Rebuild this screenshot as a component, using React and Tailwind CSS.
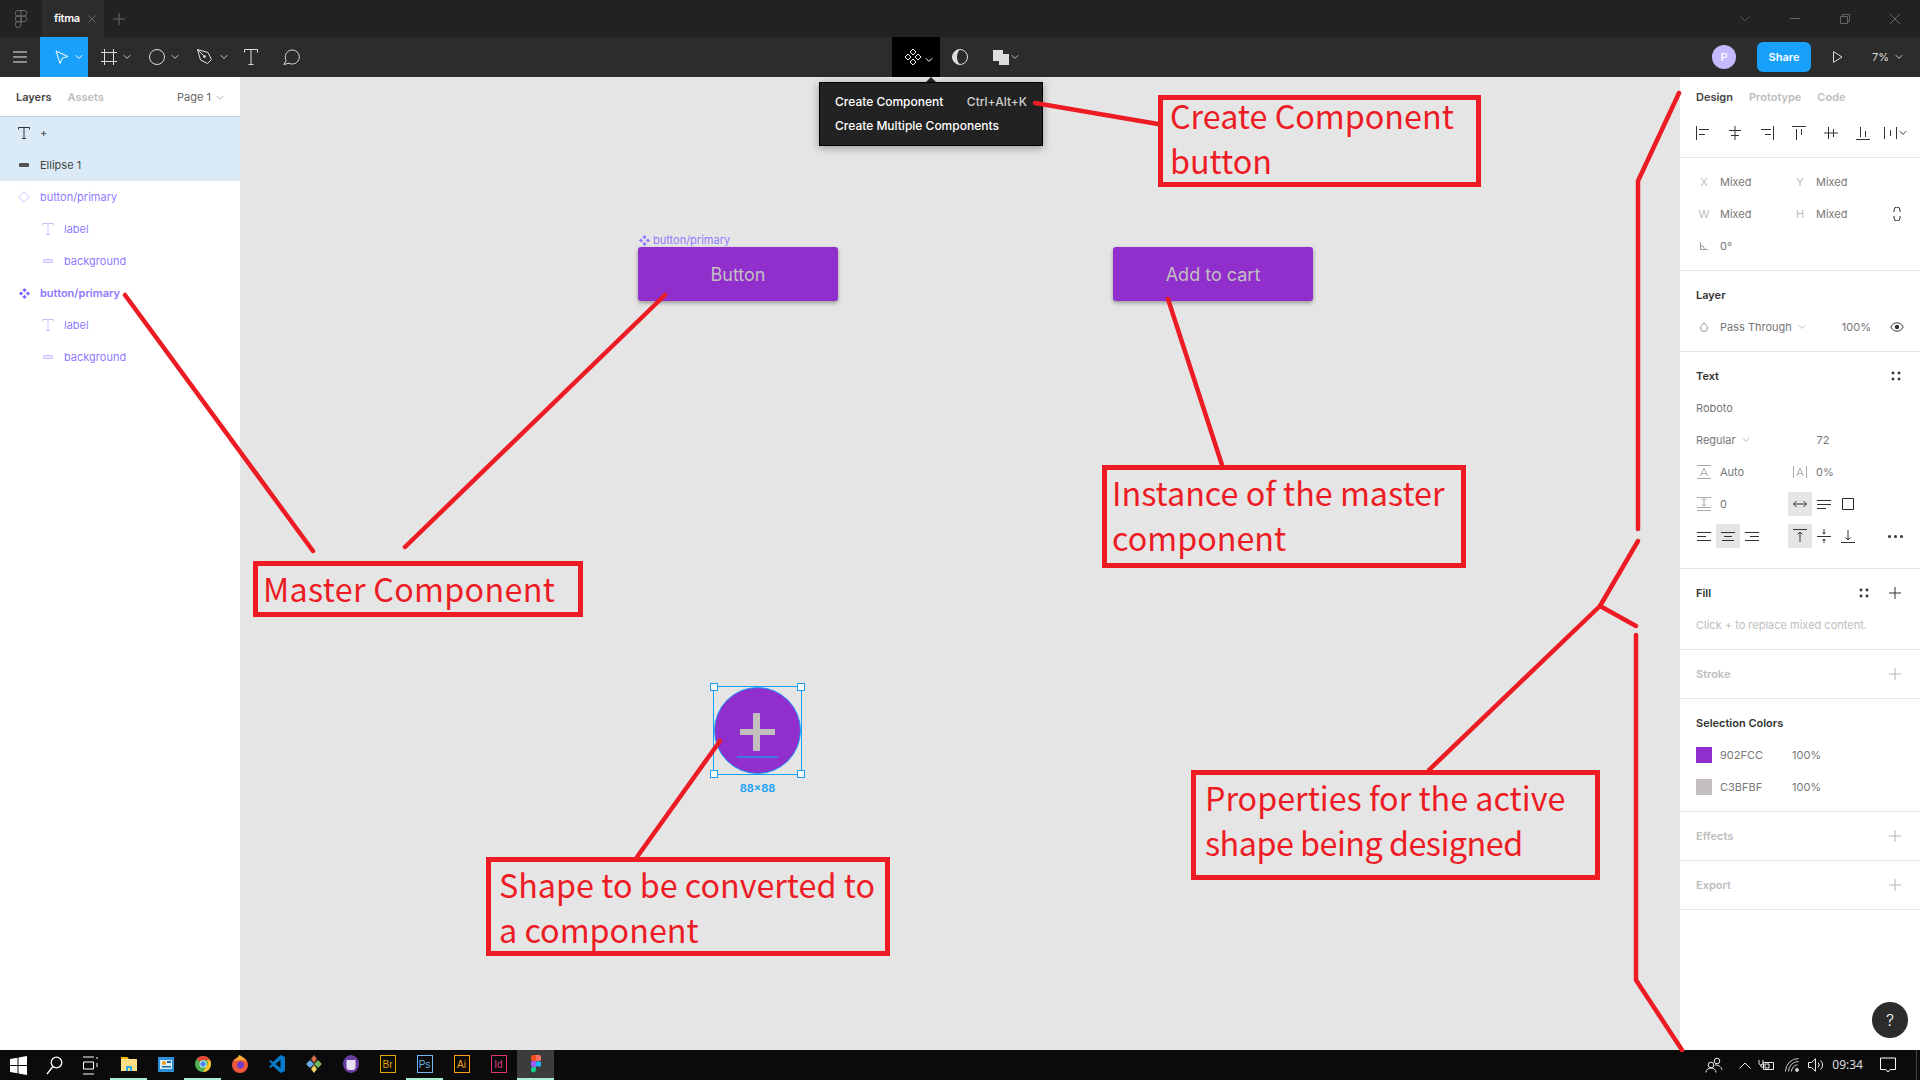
import React from 'react';

const Chevron = ({ className = 'text-[#b3b3b3]' }) => (
  <svg width="8" height="6" viewBox="0 0 8 6" fill="none" stroke="currentColor" className={className}><path d="M.8 1.2 4 4.4l3.2-3.2" /></svg>
);

const Plus = ({ className = 'text-[#b3b3b3]' }) => (
  <svg width="12" height="12" viewBox="0 0 12 12" stroke="currentColor" className={className}><path d="M6 0v12M0 6h12" /></svg>
);

const Dots = () => (
  <svg width="10" height="10" viewBox="0 0 10 10" fill="#333"><circle cx="2" cy="2" r="1.4" /><circle cx="8" cy="2" r="1.4" /><circle cx="2" cy="8" r="1.4" /><circle cx="8" cy="8" r="1.4" /></svg>
);

const TIcon = ({ className }) => (
  <svg width="12" height="12" viewBox="0 0 12 12" fill="none" stroke="currentColor" className={className}><path d="M.5 2.5V.5h11v2M6 .5v11M4 11.5h4" /></svg>
);

const RectIcon = ({ dark }) => (
  <div className={dark ? 'h-[4px] w-[10px] rounded-[1px] bg-[#555]' : 'h-[4px] w-[10px] rounded-[1px] border border-[#c8c0ff] bg-[#ece9ff]'} />
);

const ComponentSmall = ({ color = '#7b61ff' }) => (
  <svg width="11" height="11" viewBox="0 0 10 10" fill={color}>
    <path d="M5 0 6.9 1.9 5 3.8 3.1 1.9zM5 6.2l1.9 1.9L5 10 3.1 8.1zM1.9 3.1 3.8 5 1.9 6.9 0 5zM8.1 3.1 10 5 8.1 6.9 6.2 5z" />
  </svg>
);

function LayerRow({ icon, indent, text, bold, selected, light }) {
  return (
    <div className={`flex h-8 items-center ${selected ? 'bg-[#daebf7]' : ''}`}>
      <div className={`flex w-6 shrink-0 justify-center ${indent ? 'ml-9' : 'ml-3'}`}>{icon}</div>
      <span className={`ml-1 text-[11px] ${bold ? 'font-semibold' : ''} ${light ? 'text-[#444]' : 'text-[#8f7bff]'}`}>{text}</span>
    </div>
  );
}

function LeftPanel() {
  return (
    <div className="w-[240px] shrink-0 bg-white">
      <div className="flex h-10 items-center border-b border-[#c9d4dc] pl-4 pr-4 pt-[2px] text-[11px]">
        <span className="font-semibold text-[#444]">Layers</span>
        <span className="ml-4 font-semibold text-[#bdbdbd]">Assets</span>
        <span className="ml-auto mr-[5px] text-[#666]">Page 1</span>
        <Chevron />
      </div>
      <LayerRow selected light icon={<TIcon className="text-[#333]" />} text="+" />
      <LayerRow selected light icon={<RectIcon dark />} text="Ellipse 1" />
      <LayerRow
        icon={<svg width="12" height="12" viewBox="0 0 12 12" fill="none" stroke="#c8c0ff"><path d="M6 .7 11.3 6 6 11.3.7 6z" /></svg>}
        text="button/primary"
      />
      <LayerRow indent icon={<TIcon className="text-[#c8c0ff]" />} text="label" />
      <LayerRow indent icon={<RectIcon />} text="background" />
      <LayerRow bold icon={<ComponentSmall />} text="button/primary" />
      <LayerRow indent icon={<TIcon className="text-[#c8c0ff]" />} text="label" />
      <LayerRow indent icon={<RectIcon />} text="background" />
    </div>
  );
}

function TitleBar() {
  return (
    <div className="flex h-[37px] shrink-0 items-center bg-[#222222]">
      <div className="flex w-[42px] justify-center">
        <svg width="12" height="18" viewBox="0 0 12 18" fill="none" stroke="#6b6b6b">
          <path d="M3 .5h6a2.7 2.7 0 0 1 0 5.6H3A2.7 2.7 0 0 1 3 .5zM3 6.1h3v5.6H3a2.8 2.8 0 0 1 0-5.6zM6 6.1h3a2.8 2.8 0 0 1 0 5.6H6zM3 11.7h3v2.9a2.9 2.9 0 1 1-3-2.9zM6 .5v5.6" />
        </svg>
      </div>
      <div className="flex h-full w-[62px] items-center bg-[#2c2c2c] pl-3">
        <span className="text-[11px] font-semibold tracking-[-0.3px] text-white">fitma</span>
        <svg width="8" height="8" viewBox="0 0 8 8" stroke="#666" className="ml-[8px]"><path d="m.5.5 7 7M7.5.5l-7 7" /></svg>
      </div>
      <div className="ml-[9px]"><Plus className="text-[#666]" /></div>
      <div className="ml-auto flex items-center">
        <div className="flex w-[50px] justify-center">
          <svg width="10" height="6" viewBox="0 0 10 6" fill="none" stroke="#555"><path d="m.5.5 4.5 4.5L9.500.5" /></svg>
        </div>
        <div className="flex w-[50px] justify-center"><div className="h-px w-[10px] bg-[#666]" /></div>
        <div className="flex w-[50px] justify-center">
          <svg width="10" height="10" viewBox="0 0 10 10" fill="none" stroke="#666"><path d="M.5 2.500h7v7h-7zM2.500 2.500v-2h7v7h-2" /></svg>
        </div>
        <div className="flex w-[50px] justify-center">
          <svg width="10" height="10" viewBox="0 0 10 10" stroke="#666"><path d="m0 0 10 10M10 0 0 10" /></svg>
        </div>
      </div>
    </div>
  );
}

function ToolBar() {
  return (
    <div className="relative flex h-10 shrink-0 items-center bg-[#2c2c2c] text-white">
      <div className="flex w-10 justify-center">
        <svg width="14" height="12" viewBox="0 0 14 12" stroke="#eee"><path d="M0 1h14M0 6h14M0 11h14" /></svg>
      </div>
      <div className="flex h-full w-12 items-center bg-[#18a0fb] pl-[15px]">
        <svg width="14" height="15" viewBox="0 0 14 15" fill="none" stroke="#fff"><path d="M1 1 13 6.500 7.500 8 5 13.500z" /></svg>
        <Chevron className="ml-[6px] text-white" />
      </div>
      <div className="ml-[13px] flex items-center">
        <svg width="16" height="16" viewBox="0 0 16 16" stroke="#ddd"><path d="M3.500 0v16M12.500 0v16M0 3.500h16M0 12.500h16" /></svg>
        <Chevron className="ml-[6px] text-[#ccc]" />
      </div>
      <div className="ml-[18px] flex items-center">
        <svg width="16" height="16" viewBox="0 0 16 16" fill="none" stroke="#ddd"><circle cx="8" cy="8" r="7.500" /></svg>
        <Chevron className="ml-[6px] text-[#ccc]" />
      </div>
      <div className="ml-[18px] flex items-center">
        <svg width="16" height="16" viewBox="0 0 16 16" fill="none" stroke="#ddd"><path d="M.5.5 11 3.500l3.500 7-4 4-7-3.500zM.5.500 6.500 6.500" /><circle cx="7.500" cy="7.500" r="1" fill="#ddd" /></svg>
        <Chevron className="ml-[7px] text-[#ccc]" />
      </div>
      <div className="ml-[16px]">
        <svg width="14" height="16" viewBox="0 0 14 16" fill="none" stroke="#ddd"><path d="M.5 3.500V.5h13v3M7 .5v15M4.500 15.500h5" /></svg>
      </div>
      <div className="ml-[25px]">
        <svg width="17" height="16" viewBox="0 0 17 16" fill="none" stroke="#ddd"><path d="M3.200 11.500A7 7 0 1 1 6 14.200L.8 15.500z" /></svg>
      </div>

      <div className="ml-[592px] flex h-full w-12 items-center bg-black pl-3">
        <svg width="18" height="18" viewBox="0 0 18 18" fill="none" stroke="#eee"><path d="M9 1l3 3-3 3-3-3zM9 11l3 3-3 3-3-3zM4 6l3 3-3 3-3-3zM14 6l3 3-3 3-3-3z" /></svg>
        <Chevron className="ml-[3px] mt-[6px] text-white" />
      </div>
      <div className="ml-3">
        <svg width="16" height="16" viewBox="0 0 16 16"><circle cx="8" cy="8" r="7.500" fill="none" stroke="#ddd" /><path d="M8 .5a7.500 7.500 0 0 0 0 15c-2-2-3-4.500-3-7.500s1-5.500 3-7.500z" fill="#ddd" /></svg>
      </div>
      <div className="ml-[25px] flex items-center">
        <svg width="16" height="15" viewBox="0 0 16 15" fill="#ddd"><path d="M0 0h10v4h6v11H6v-4H0z" /></svg>
        <Chevron className="ml-[2px] text-[#bbb]" />
      </div>

      <div className="ml-auto flex items-center">
        <div className="flex h-6 w-6 items-center justify-center rounded-full bg-[#c7b9ff] text-[11px] font-medium">P</div>
        <div className="ml-[21px] flex h-[30px] w-[54px] items-center justify-center rounded-[6px] bg-[#18a0fb] text-[11px] font-semibold">Share</div>
        <svg width="10" height="12" viewBox="0 0 10 12" fill="none" stroke="#ddd" className="ml-[22px]"><path d="M.5.6 9 6 .5 11.400z" /></svg>
        <span className="ml-[29px] text-[11px] text-[#ddd]">7%</span>
        <Chevron className="ml-[6px] mr-[17px] text-[#ccc]" />
      </div>
    </div>
  );
}

function Callout({ className, children }) {
  return (
    <div className={`absolute border-[5px] border-[#ed1c24] font-['Noto_Sans_CJK_SC',sans-serif] text-[32.3px] leading-[45px] text-[#ed1c24] ${className}`}>
      {children}
    </div>
  );
}

function Canvas() {
  return (
    <div className="relative flex-1 bg-[#e5e5e5]">
      {/* master button */}
      <div className="absolute left-[399px] top-[155px] flex items-center gap-[3px] text-[11px] text-[#8f7bff]">
        <ComponentSmall color="#8f7bff" /> button/primary
      </div>
      <div className="absolute left-[398px] top-[170px] flex h-[54px] w-[200px] items-center justify-center rounded-[3px] bg-[#902fcc] text-[18px] text-[#c3bfbf] shadow-[0_2px_4px_rgba(0,0,0,0.35)]">Button</div>
      <div className="absolute left-[873px] top-[170px] flex h-[54px] w-[200px] items-center justify-center rounded-[3px] bg-[#902fcc] text-[18px] text-[#c3bfbf] shadow-[0_2px_4px_rgba(0,0,0,0.35)]">Add to cart</div>

      {/* selected ellipse */}
      <div className="absolute left-[473px] top-[609px] flex h-[89px] w-[89px] items-center justify-center border border-[#18a0fb]">
        <div className="relative h-[87px] w-[87px] rounded-full border border-[#18a0fb] bg-[#902fcc]">
          <div className="absolute left-[38px] top-[25px] h-[38px] w-[7px] bg-[#c3bfbf]" />
          <div className="absolute left-[25px] top-[41px] h-[6px] w-[35px] bg-[#c3bfbf]" />
          <div className="absolute left-[22px] top-[68px] h-[2px] w-[41px] bg-[#3f78e0]" />
        </div>
        <div className="absolute -left-[4px] -top-[4px] h-2 w-2 border border-[#18a0fb] bg-white" />
        <div className="absolute -right-[4px] -top-[4px] h-2 w-2 border border-[#18a0fb] bg-white" />
        <div className="absolute -left-[4px] -bottom-[4px] h-2 w-2 border border-[#18a0fb] bg-white" />
        <div className="absolute -right-[4px] -bottom-[4px] h-2 w-2 border border-[#18a0fb] bg-white" />
      </div>
      <div className="absolute left-[473px] top-[703px] w-[89px] text-center text-[11px] font-semibold text-[#18a0fb]">88×88</div>

      {/* component tooltip */}
      <div className="absolute left-[579px] top-[5px] h-16 w-[224px] border border-black bg-[#222222] pl-[15px] pt-[7px] text-[12px] font-medium text-white shadow-[0_2px_8px_rgba(0,0,0,0.35)]">
        <div className="flex h-6 items-center">
          <span>Create Component</span>
          <span className="ml-auto mr-[15px] text-[#cfcfcf]">Ctrl+Alt+K</span>
        </div>
        <div className="flex h-6 items-center">Create Multiple Components</div>
      </div>
      <div className="absolute left-[686px] top-0 h-0 w-0 border-x-[5px] border-b-[5px] border-x-transparent border-b-[#222222]" />

      <Callout className="left-[918px] top-[18px] h-[92px] w-[323px] pl-[7px]"><div className="-mt-[7px]">Create Component<br />button</div></Callout>
      <Callout className="left-[13px] top-[484px] h-[56px] w-[330px] pl-[5px] tracking-[0.3px]">Master Component</Callout>
      <Callout className="left-[862px] top-[388px] h-[103px] w-[364px] pl-[5px]">Instance of the master<br />component</Callout>
      <Callout className="left-[246px] top-[780px] h-[99px] w-[404px] pl-[8px]">Shape to be converted to<br />a component</Callout>
      <Callout className="left-[951px] top-[693px] h-[110px] w-[409px] pl-[9px]">Properties for the active<br /><span className="tracking-[-0.5px]">shape being designed</span></Callout>
    </div>
  );
}

const Section = ({ className = '', children }) => <div className={`border-b border-[#e5e5e5] ${className}`}>{children}</div>;
const Row = ({ children }) => <div className="flex h-8 items-center pl-3 pr-[19px] text-[11px] text-[#777]">{children}</div>;
const Cell = ({ active, children }) => (
  <div className={`flex h-6 w-6 shrink-0 items-center justify-center rounded-[2px] ${active ? 'bg-[#e5e5e5]' : ''}`}>{children}</div>
);
const Label = ({ children }) => <div className="flex w-6 shrink-0 justify-center text-[#bdbdbd]">{children}</div>;
const Value = ({ children }) => <div className="ml-1 w-[68px] shrink-0">{children}</div>;
const Head = ({ muted, children, right }) => (
  <div className="flex h-8 items-center pl-4 pr-[19px] text-[11px] font-semibold">
    <span className={muted ? 'text-[#bdbdbd]' : 'text-[#333]'}>{children}</span>
    <div className="ml-auto flex items-center">{right}</div>
  </div>
);
const Icon12 = ({ d, w = 14, h = 14, stroke = '#333' }) => (
  <svg width={w} height={h} viewBox={`0 0 ${w} ${h}`} fill="none" stroke={stroke}><path d={d} /></svg>
);

function RightPanel() {
  return (
    <div className="w-[240px] shrink-0 bg-white">
      <Section className="pb-2">
        <div className="flex h-10 items-center gap-4 pl-4 text-[11px] font-semibold text-[#bdbdbd]">
          <span className="text-[#444]">Design</span>
          <span>Prototype</span>
          <span>Code</span>
        </div>
        <div className="flex h-8 items-center pl-[7px]">
          {[
            'M.5 0v14M3 3.500h10M3 8.500h6',
            'M7 0v14M1 4.500h12M3 9.500h8',
            'M13.500 0v14M1 3.500h10M5 8.500h6',
            'M0 .5h14M4.500 3v11M9.500 3v6',
            'M0 7h14M4.500 1v12M9.500 3v8',
            'M0 13.500h14M4.500 1v10M9.500 5v6',
          ].map((d) => (
            <div key={d} className="flex w-8 justify-center"><Icon12 d={d} /></div>
          ))}
          <div className="flex w-8 items-center justify-center">
            <Icon12 d="M.5 1v12M12.500 1v12M6.500 4v6" w={13} />
            <Chevron className="ml-[2px] text-[#333]" />
          </div>
        </div>
      </Section>
      <Section className="py-2">
        <Row><Label>X</Label><Value>Mixed</Value><Label>Y</Label><Value>Mixed</Value></Row>
        <Row>
          <Label>W</Label><Value>Mixed</Value><Label>H</Label><Value>Mixed</Value>
          <div className="ml-auto"><Icon12 w={8} d="M1 5V3a3 3 0 0 1 6 0v2M1 9v2a3 3 0 0 0 6 0V9" /></div>
        </Row>
        <Row><Label><Icon12 w={8} h={8} stroke="#999" d="M.5 0v7.500H8M.5 3.500a4 4 0 0 1 4 4" /></Label><Value>0°</Value></Row>
      </Section>
      <Section className="py-2">
        <Head>Layer</Head>
        <Row>
          <Label><Icon12 w={8} h={10} stroke="#999" d="M4 .8C5 2.500 7.500 4 7.500 6a3.500 3.500 0 0 1-7 0C.5 4 3 2.500 4 .8z" /></Label>
          <span className="ml-1">Pass Through</span>
          <Chevron className="ml-[6px] text-[#bbb]" />
          <span className="ml-auto mr-[19px]">100%</span>
          <svg width="14" height="10" viewBox="0 0 14 10" className="-mr-[3px]"><path d="M.8 5C2.500 2 4.500.8 7 .8S11.500 2 13.200 5C11.500 8 9.500 9.200 7 9.200S2.500 8 .8 5z" fill="none" stroke="#333" /><circle cx="7" cy="5" r="2.200" fill="#333" /></svg>
        </Row>
      </Section>
      <Section className="pb-4 pt-2">
        <Head right={<Dots />}>Text</Head>
        <div className="flex h-8 items-center pl-4 text-[11px] text-[#777]">Roboto</div>
        <div className="flex h-8 items-center pl-4 text-[11px] text-[#777]">
          <span>Regular</span>
          <Chevron className="ml-[6px] text-[#bbb]" />
          <span className="ml-[67px]">72</span>
        </div>
        <Row>
          <Cell><Icon12 stroke="#aaa" d="M0 .5h14M0 13.500h14M3.500 11 7 3l3.500 8M4.800 8.500h4.400" /></Cell>
          <Value>Auto</Value>
          <Cell><Icon12 stroke="#aaa" d="M.5 1v12M13.500 1v12M4 11l3-8 3 8M5 8.500h4" /></Cell>
          <span className="ml-1">0%</span>
        </Row>
        <Row>
          <Cell><Icon12 stroke="#aaa" d="M0 .5h14M0 10.500h14M0 13.500h14M7 2v7M5 3.500l2-2 2 2M5 7.500l2 2 2-2" /></Cell>
          <Value>0</Value>
          <Cell active><Icon12 d="M.5 7h13M3.500 4l-3 3 3 3M10.500 4l3 3-3 3" /></Cell>
          <Cell><Icon12 d="M0 3.500h14M0 7.500h14M0 11.500h9" /></Cell>
          <Cell><Icon12 d="M1.500 1.500h11v11h-11z" stroke="#222" /></Cell>
        </Row>
        <Row>
          <Cell><Icon12 d="M0 3.500h14M0 7.500h9M0 11.500h14" /></Cell>
          <Cell active><Icon12 d="M0 3.500h14M3 7.500h8M1 11.500h12" /></Cell>
          <Cell><Icon12 d="M0 3.500h14M5 7.500h9M0 11.500h14" /></Cell>
          <div className="w-6 shrink-0" />
          <Cell active><Icon12 d="M0 .5h14M7 3v10M4.500 5.500 7 3l2.500 2.500" /></Cell>
          <Cell><Icon12 d="M0 7.500h14M7 0v5M5.500 3.500 7 5l1.500-1.500M7 10v4M5.500 11.500 7 10l1.500 1.500" /></Cell>
          <Cell><Icon12 d="M0 13.500h14M7 1v10M4.500 8.500 7 11l2.500-2.500" /></Cell>
          <div className="-mr-[2px] ml-auto flex gap-[3px]">
            <div className="h-[3px] w-[3px] rounded-full bg-[#333]" />
            <div className="h-[3px] w-[3px] rounded-full bg-[#333]" />
            <div className="h-[3px] w-[3px] rounded-full bg-[#333]" />
          </div>
        </Row>
      </Section>
      <Section className="py-2">
        <Head right={<div className="flex items-center gap-5"><Dots /><Plus className="text-[#333]" /></div>}>Fill</Head>
        <div className="flex h-8 items-center pl-4 text-[11px] text-[#bdbdbd]">Click + to replace mixed content.</div>
      </Section>
      <Section className="py-2"><Head muted right={<Plus />}>Stroke</Head></Section>
      <Section className="py-2">
        <Head>Selection Colors</Head>
        <div className="flex h-8 items-center pl-4 text-[11px] text-[#777]">
          <div className="h-4 w-4 bg-[#902fcc]" />
          <span className="ml-2 w-[72px]">902FCC</span><span>100%</span>
        </div>
        <div className="flex h-8 items-center pl-4 text-[11px] text-[#777]">
          <div className="h-4 w-4 bg-[#c3bfbf]" />
          <span className="ml-2 w-[72px]">C3BFBF</span><span>100%</span>
        </div>
      </Section>
      <Section className="py-2"><Head muted right={<Plus />}>Effects</Head></Section>
      <Section className="py-2"><Head muted right={<Plus />}>Export</Head></Section>
    </div>
  );
}

const AppBox = ({ className, children }) => (
  <div className={`flex h-[18px] w-4 items-center justify-center border font-['Liberation_Sans',sans-serif] text-[10px] ${className}`}>{children}</div>
);

const TASK_ITEMS = [
  {
    key: 'explorer', on: true,
    icon: <svg width="16" height="16" viewBox="0 0 16 16"><path d="M0 1h6l2 2h8v12H0z" fill="#ffe082" /><path d="M0 1h6l1 2H0z" fill="#f4b400" /><path d="M5 15v-5h6v5H9v-3H7v3z" fill="#2ea8e6" /></svg>,
  },
  {
    key: 'outlook',
    icon: <svg width="16" height="15" viewBox="0 0 16 15"><path d="M0 0h16v15H0z" fill="#2f8fd6" /><path d="M2 3h12v9H2z" fill="#d7ecf8" /><circle cx="6" cy="6" r="2" fill="#f39c12" /><path d="M9 4h4v2H9zM4 9h9v1.500H4z" fill="#1769aa" /></svg>,
  },
  {
    key: 'chrome', on: true,
    icon: <svg width="16" height="16" viewBox="0 0 16 16"><circle cx="8" cy="8" r="8" fill="#4caf50" /><path d="M8 0a8 8 0 0 1 7 4H8a4 4 0 0 0-3.500 2L2 2.500A8 8 0 0 1 8 0z" fill="#ea4335" /><path d="M15 4a8 8 0 0 1-7 12l3.500-6a4 4 0 0 0 0-6z" fill="#fbc02d" /><circle cx="8" cy="8" r="3.500" fill="#fff" /><circle cx="8" cy="8" r="2.700" fill="#4285f4" /></svg>,
  },
  {
    key: 'firefox',
    icon: <svg width="16" height="18" viewBox="0 0 16 18"><circle cx="8" cy="10" r="8" fill="#f0563c" /><path d="M2 6C4 4 6 3 7 0c3 1 7 4 8 8-2-3-4-3-7-3z" fill="#ffb02e" /><circle cx="8.500" cy="10" r="3.500" fill="#6b3fc9" /></svg>,
  },
  {
    key: 'vscode',
    icon: <svg width="16" height="18" viewBox="0 0 16 18"><path d="M11.500 0 16 2v14l-4.500 2L4 11l-2.500 2L0 12l3-3-3-3 1.500-1L4 7z" fill="#0a7acb" /><path d="M11.500 5v8L6.500 9z" fill="#0b0b0b" /></svg>,
  },
  {
    key: 'tree',
    icon: <svg width="16" height="18" viewBox="0 0 16 18"><path d="m4 5 4 4-4 4-4-4z" fill="#6aa9e9" /><path d="m12 5 4 4-4 4-4-4z" fill="#74b65f" /><path d="m8 0 3 4-3 4-3-4z" fill="#d9694f" /><path d="m8 10 3 4-3 4-3-4z" fill="#f0d264" /></svg>,
  },
  {
    key: 'cat',
    icon: <svg width="16" height="18" viewBox="0 0 16 18"><ellipse cx="8" cy="9" rx="8" ry="9" fill="#6b3fa0" /><path d="M3.500 5h9v7.500a3 3 0 0 1-3 2.500h-3a3 3 0 0 1-3-2.500z" fill="#e8e0f4" /></svg>,
  },
  { key: 'br', icon: <AppBox className="border-[#e5a800] text-[#e5a800]">Br</AppBox> },
  { key: 'ps', on: true, icon: <AppBox className="border-[#6fb6f2] text-[#6fb6f2]">Ps</AppBox> },
  { key: 'ai', icon: <AppBox className="border-[#f7a11a] text-[#f7a11a]">Ai</AppBox> },
  { key: 'id', icon: <AppBox className="border-[#e0347c] text-[#e0347c]">Id</AppBox> },
  {
    key: 'figma', on: true, active: true,
    icon: <svg width="10" height="18" viewBox="0 0 10 18"><path d="M2.500 0H5v6H2.500a3 3 0 0 1 0-6z" fill="#f24e1e" /><path d="M5 0h2.500a3 3 0 0 1 0 6H5z" fill="#ff7262" /><path d="M2.500 6H5v6H2.500a3 3 0 0 1 0-6z" fill="#a259ff" /><circle cx="7.500" cy="9" r="2.800" fill="#1abcfe" /><path d="M2.500 12H5v3a2.700 2.700 0 1 1-2.500-3z" fill="#0acf83" /></svg>,
  },
];

function TaskBar() {
  return (
    <div className="flex h-[30px] shrink-0 items-center bg-[#0b0b0b] text-white">
      <div className="flex w-9 justify-center">
        <svg width="17" height="19" viewBox="0 0 17 19" fill="#fff"><path d="M0 3l7.500-1.200V9H0zM8.500 1.600 17 0v9H8.500zM0 10h7.500v7.200L0 16zM8.500 10H17v9l-8.500-1.600z" /></svg>
      </div>
      <div className="flex w-9 justify-center">
        <svg width="17" height="19" viewBox="0 0 17 19" fill="none" stroke="#fff" strokeWidth="1.300"><circle cx="10.500" cy="6.500" r="5.300" /><path d="M7 10.500 1 18" /></svg>
      </div>
      <div className="flex w-9 justify-center">
        <svg width="16" height="19" viewBox="0 0 16 19" fill="none" stroke="#fff"><path d="M1 1h11M1 18h11M1.500 6h10v7h-10zM15 1v2M15 7v4" /></svg>
      </div>
      <div className="ml-[2px] flex h-full">
        {TASK_ITEMS.map((item) => (
          <div
            key={item.key}
            className={`flex h-full w-[37px] items-center justify-center border-b-2 ${item.on ? 'border-[#a9f0d1]' : 'border-transparent'} ${item.active ? 'bg-[#3c3c3c]' : ''}`}
          >
            {item.icon}
          </div>
        ))}
      </div>
      <div className="ml-auto flex h-full items-center">
        <svg width="18" height="16" viewBox="0 0 18 16" fill="none" stroke="#eee"><circle cx="12" cy="4" r="2.800" /><circle cx="6" cy="8" r="2.800" /><path d="M.8 15.500c.5-3 2.500-4.500 5.200-4.500s4.700 1.500 5.200 4.500M10 8c3 0 6 1 7 5" /></svg>
        <svg width="12" height="7" viewBox="0 0 12 7" fill="none" stroke="#eee" className="ml-[16px]"><path d="m.5 6.500 5.500-5.500 5.500 5.500" /></svg>
        <svg width="16" height="12" viewBox="0 0 16 12" fill="none" stroke="#eee" className="ml-[7px]"><path d="M5.500 3.500h10v7h-10zM7 5h4v4H7z" /><path d="M1 1v3a2 2 0 0 0 4 0V1M3 6v2h2" /></svg>
        <svg width="14" height="14" viewBox="0 0 14 14" fill="none" stroke="#ccc" className="ml-[11px]"><path d="M.5 13.500A13 13 0 0 1 13.500.5M3.500 13.500a10 10 0 0 1 10-10M6.500 13.500a7 7 0 0 1 6-6.800" /><circle cx="12" cy="12" r="1.500" fill="#ccc" /></svg>
        <svg width="16" height="14" viewBox="0 0 16 14" fill="none" stroke="#eee" className="ml-[9px]"><path d="M.5 4.500h3L7.500.8v12.400l-4-3.700h-3zM10 4.500a3.500 3.500 0 0 1 0 5M12.500 2.500a6 6 0 0 1 0 9" /></svg>
        <span className="ml-[8px] font-['Noto_Sans',sans-serif] text-[12px] text-[#ddd]">09:34</span>
        <svg width="16" height="16" viewBox="0 0 16 16" fill="none" stroke="#fff" className="ml-[17px]"><path d="M.5 1h15v11.500H10L8 15l-2-2.500H.5z" /></svg>
        <div className="ml-[20px] mr-[3px] h-full w-px bg-[#444]" />
      </div>
    </div>
  );
}

export default function App() {
  return (
    <div className="relative flex h-[1080px] w-[1920px] flex-col overflow-hidden font-['Inter',sans-serif]">
      <TitleBar />
      <ToolBar />
      <div className="flex min-h-0 flex-1">
        <LeftPanel />
        <Canvas />
        <RightPanel />
      </div>
      <TaskBar />

      {/* help */}
      <div className="absolute left-[1872px] top-[1002px] flex h-9 w-9 items-center justify-center rounded-full bg-[#2c2c2c] text-[16px] font-light text-white">?</div>

      {/* hand drawn arrows */}
      <svg width="1920" height="1080" viewBox="0 0 1920 1080" fill="none" stroke="#ed1c24" strokeWidth="4.5" strokeLinecap="round" strokeLinejoin="round" className="pointer-events-none absolute left-0 top-0">
        <path d="M125 295 313 551" />
        <path d="M665 295 405 547" />
        <path d="M1168 299 1222 465" />
        <path d="M1035 103 1158 124" />
        <path d="M720 741 637 857" />
        <path d="M1679 93 1638 181V529" />
        <path d="M1638 541 1600 606" />
        <path d="M1600 606 1636 626" />
        <path d="M1600 606 1429 770" />
        <path d="M1636 635V980L1682 1050" />
      </svg>
    </div>
  );
}
